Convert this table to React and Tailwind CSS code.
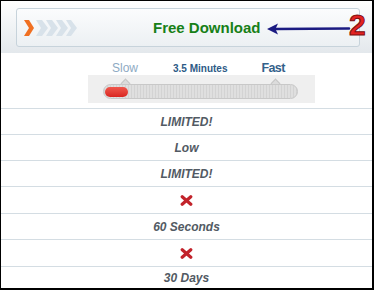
export default function App() {
  const rows = [
    { t: 'LIMITED!', h: 'h-[26px]' },
    { t: 'Low', h: 'h-[26px]' },
    { t: 'LIMITED!', h: 'h-[26px]' },
    { t: 'x', h: 'h-[27px]' },
    { t: '60 Seconds', h: 'h-[26px]' },
    { t: 'x', h: 'h-[27px]' },
    { t: '30 Days', h: 'flex-1' },
  ];
  return (
    <div className="w-[374px] h-[290px] border-l border-t border-r-2 border-b-2 border-black bg-white overflow-hidden flex flex-col font-['Liberation_Sans',Arial,sans-serif]">
      {/* header */}
      <div className="relative h-[52px] shrink-0 bg-linear-to-b from-[#fefefe] to-[#e3e8ec] pl-[15px] pt-[7px]">
        <div className="w-[344px] h-[39px] rounded-[3px] border border-[#c7d3db] bg-linear-to-b from-[#fbfcfd] to-[#ecf0f3] flex items-center pl-[7px]">
          <svg width="54" height="16" viewBox="0 0 54 16" className="shrink-0">
            <polygon points="12,0 18,0 24,8 18,16 12,16 17,8" fill="#d8e2ea" />
            <polygon points="22,0 28,0 34,8 28,16 22,16 27,8" fill="#d8e2ea" />
            <polygon points="32,0 38,0 44,8 38,16 32,16 37,8" fill="#d8e2ea" />
            <polygon points="42,0 47,0 53,8 47,16 42,16 47,8" fill="#d8e2ea" />
            <polygon points="0,0 5,0 10,8 5,16 0,16 5,8" fill="#f07022" />
          </svg>
          <span className="ml-[75px] text-[15px] font-bold text-[#178017] leading-none">Free Download</span>
        </div>
        <svg width="84" height="14" viewBox="0 0 84 14" className="absolute left-[266px] top-[21px]">
          <path d="M8 7 L82 6.5" stroke="#1b1b82" strokeWidth="2.5" strokeLinecap="round" />
          <polygon points="0,7 11,1.5 8.5,7 11,12.5" fill="#1b1b82" />
        </svg>
        <span className="absolute left-[348px] top-[9px] text-[30px] leading-none font-bold text-[#e32222] [-webkit-text-stroke:1px_#7a0e0e]">2</span>
      </div>

      {/* slider */}
      <div className="h-[55px] shrink-0 pl-[87px] pt-[9px]">
        <div className="h-[13px] flex items-baseline leading-none">
          <span className="ml-[24px] text-[12px] text-[#8eaac3]">Slow</span>
          <span className="ml-[35px] text-[10px] font-bold text-[#2d5a86]">3.5 Minutes</span>
          <span className="ml-[34px] text-[12.5px] font-bold tracking-[-0.6px] text-[#34618a]">Fast</span>
        </div>
        <div className="relative w-[227px] h-[28px] bg-[#efefef] pl-[15px] pt-[9px]">
          <div className="absolute left-[34px] top-[5px] w-[7px] h-[7px] rotate-45 border-l border-t border-[#c6c6c6] bg-[#dcdcdc]" />
          <div className="absolute left-[184px] top-[5px] w-[7px] h-[7px] rotate-45 border-l border-t border-[#c6c6c6] bg-[#dcdcdc]" />
          <div className="relative w-[195px] h-[15px] rounded-full border border-[#c8c8c8] bg-[repeating-linear-gradient(90deg,#d3d3d3_0px,#d3d3d3_1px,#dfdfdf_1px,#dfdfdf_3px)]">
            <div className="absolute left-[1px] top-[2px] w-[23px] h-[10px] rounded-full bg-linear-to-b from-[#f0564c] to-[#d92420]" />
          </div>
        </div>
      </div>

      {/* rows */}
      {rows.map((r, i) => (
        <div key={i} className={`${r.h} shrink-0 border-t border-[#d4dde3] flex items-center justify-center`}>
          {r.t === 'x' ? (
            <svg width="13" height="11" viewBox="0 0 13 11">
              <path d="M2.2 1.8 L10.8 9.2 M10.8 1.8 L2.2 9.2" stroke="#c2232b" strokeWidth="3.2" strokeLinecap="round" />
            </svg>
          ) : (
            <span className="text-[12px] font-bold italic text-[#525a63] leading-none">{r.t}</span>
          )}
        </div>
      ))}
    </div>
  );
}
